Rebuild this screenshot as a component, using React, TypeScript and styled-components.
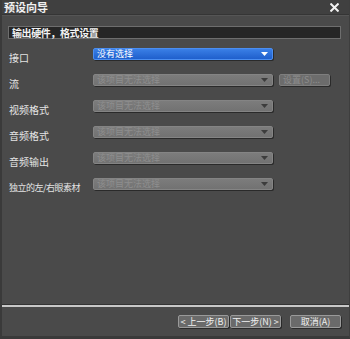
import styled, { createGlobalStyle } from 'styled-components'

const GlobalStyle = createGlobalStyle`
	html, body {
		margin: 0;
		padding: 0;
		background: #4a4a4a;
	}
	body {
		font-family: "Noto Sans CJK SC", "DejaVu Sans", sans-serif;
	}
`

interface IRow {
	label: string
	value: string
	active?: boolean
	extra?: string
	condensed?: boolean
}

const rows: IRow[] = [
	{ label: '接口', value: '没有选择', active: true },
	{ label: '流', value: '该项目无法选择', extra: '设置(S)...' },
	{ label: '视频格式', value: '该项目无法选择' },
	{ label: '音频格式', value: '该项目无法选择' },
	{ label: '音频输出', value: '该项目无法选择' },
	{ label: '独立的左/右眼素材', value: '该项目无法选择', condensed: true },
]

const CloseIcon = () => (
	<svg width="9" height="9" viewBox="0 0 9 9">
		<path d="M1.2 1.2 L7.8 7.8 M7.8 1.2 L1.2 7.8" stroke="#f2f2f2" strokeWidth="2" strokeLinecap="square" />
	</svg>
)

const Caret = ({ active }: { active?: boolean }) => (
	<svg width="7" height="4" viewBox="0 0 7 4">
		<path d="M0 0 H7 L3.5 4 Z" fill={active ? '#ffffff' : '#3c3c3c'} />
	</svg>
)

const App = () => {
	return (
		<>
			<GlobalStyle />
			<Window>
				<TitleBar>
					<Title>预设向导</Title>
					<CloseButton>
						<CloseIcon />
					</CloseButton>
				</TitleBar>
				<Body>
					<Header>输出硬件，格式设置</Header>
					<Form>
						{rows.map((row) => (
							<Row key={row.label}>
								<Label $condensed={row.condensed}>{row.label}</Label>
								<Select $active={row.active}>
									<span>{row.value}</span>
									<Caret active={row.active} />
								</Select>
								{row.extra && <SmallButton $disabled>{row.extra}</SmallButton>}
							</Row>
						))}
					</Form>
				</Body>
				<Footer>
					<Button>&lt; 上一步(B)</Button>
					<Button>下一步(N) &gt;</Button>
					<CancelButton>取消(A)</CancelButton>
				</Footer>
			</Window>
		</>
	)
}

const Window = styled.div`
	width: 350px;
	height: 339px;
	box-sizing: border-box;
	background: #4a4a4a;
	border-left: 2px solid #3a3a3a;
	border-right: 1px solid #3e3e3e;
	border-bottom: 3px solid #3a3a3a;
	display: flex;
	flex-direction: column;
	overflow: hidden;
`

const TitleBar = styled.div`
	height: 15px;
	box-sizing: border-box;
	flex: none;
	background: #404040;
	border-bottom: 1px solid #353535;
	display: flex;
	align-items: center;
	justify-content: space-between;
	padding: 0 10px 0 2px;
`

const Title = styled.div`
	font-size: 11px;
	font-weight: bold;
	color: #f0f0f0;
	line-height: 14px;
`

const CloseButton = styled.div`
	display: flex;
	align-items: center;
`

const Body = styled.div`
	flex: 1;
	padding: 9px 8px 0 6px;
	display: flex;
	flex-direction: column;
	border-top: 1px solid #555555;
`

const Header = styled.div`
	height: 13px;
	box-sizing: border-box;
	background: #262626;
	border: 1px solid #6e6e6e;
	color: #f2f2f2;
	font-size: 10px;
	font-weight: bold;
	letter-spacing: -0.4px;
	line-height: 11px;
	padding-left: 3px;
	margin-top: 1px;
`

const Form = styled.div`
	display: grid;
	grid-auto-rows: 26px;
	margin-top: 9px;
`

const Row = styled.div`
	display: grid;
	grid-template-columns: 85px 180px auto;
	align-items: start;
`

const Label = styled.div<{ $condensed?: boolean }>`
	color: #e4e4e4;
	font-size: ${({ $condensed }) => ($condensed ? '9px' : '10px')};
	line-height: 12px;
	margin-top: 4px;
	padding-left: 1px;
	white-space: nowrap;
	letter-spacing: ${({ $condensed }) => ($condensed ? '-0.5px' : '0')};
`

const Select = styled.div<{ $active?: boolean }>`
	height: 12px;
	box-sizing: border-box;
	border-radius: 2px;
	display: flex;
	align-items: center;
	justify-content: space-between;
	padding: 0 4px 0 3px;
	font-size: 9px;
	line-height: 12px;
	background: ${({ $active }) => ($active ? 'linear-gradient(#3a7fe6, #1f5fcc)' : 'linear-gradient(#7c7c7c, #727272)')};
	color: ${({ $active }) => ($active ? '#ffffff' : '#8e8e8e')};
	border: 1px solid ${({ $active }) => ($active ? '#4b8ef0' : '#848484')};
	box-shadow: 1px 1px 0 #2a2a2a;
`

const SmallButton = styled.div<{ $disabled?: boolean }>`
	margin-left: 6px;
	width: 51px;
	height: 12px;
	box-sizing: border-box;
	border-radius: 2px;
	background: #6c6c6c;
	border: 1px solid #7e7e7e;
	box-shadow: 1px 1px 0 #2a2a2a;
	color: ${({ $disabled }) => ($disabled ? '#8c8c8c' : '#e8e8e8')};
	font-size: 9px;
	line-height: 10px;
	padding-left: 3px;
	white-space: nowrap;
`

const Footer = styled.div`
	flex: none;
	height: 31px;
	box-sizing: border-box;
	border-top: 2px solid #c8c8c8;
	box-shadow: 0 -1px 0 #333333;
	display: flex;
	justify-content: flex-end;
	align-items: flex-start;
	padding: 8px 8px 0 0;
	gap: 1px;
`

const Button = styled.div`
	width: 51px;
	height: 13px;
	box-sizing: border-box;
	border-radius: 2px;
	background: #6a6a6a;
	border: 1px solid #9a9a9a;
	box-shadow: 1px 1px 0 #2a2a2a;
	color: #f0f0f0;
	font-size: 9px;
	line-height: 11px;
	text-align: center;
	white-space: nowrap;
`

const CancelButton = styled(Button)`
	margin-left: 8px;
`

export default App
